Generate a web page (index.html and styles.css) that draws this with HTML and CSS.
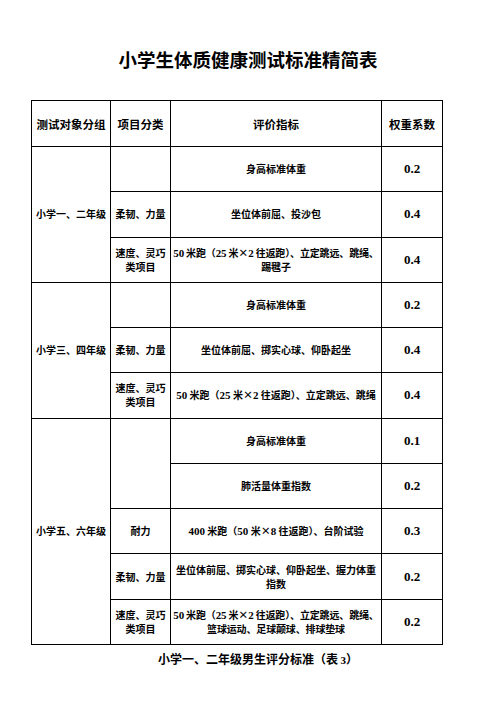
FILE: index.html
```html
<!DOCTYPE html>
<html lang="zh">
<head>
<meta charset="utf-8">
<link rel="stylesheet" href="styles.css">
</head>
<body>
<div class="page">
  <h1 class="title">小学生体质健康测试标准精简表</h1>
  <table class="grid">
    <colgroup>
      <col class="c1"><col class="c2"><col class="c3"><col class="c4">
    </colgroup>
    <thead>
      <tr class="head">
        <th>测试对象分组</th>
        <th>项目分类</th>
        <th>评价指标</th>
        <th>权重系数</th>
      </tr>
    </thead>
    <tbody>
      <tr>
        <td rowspan="3">小学一、二年级</td>
        <td></td>
        <td>身高标准体重</td>
        <td class="num">0.2</td>
      </tr>
      <tr>
        <td>柔韧、力量</td>
        <td>坐位体前屈、投沙包</td>
        <td class="num">0.4</td>
      </tr>
      <tr>
        <td>速度、灵巧<br>类项目</td>
        <td class="tight"><span class="n">50</span> 米跑（<span class="n">25</span> 米×<span class="n">2</span> 往返跑）、立定跳远、跳绳、<br>踢毽子</td>
        <td class="num">0.4</td>
      </tr>
      <tr>
        <td rowspan="3">小学三、四年级</td>
        <td></td>
        <td>身高标准体重</td>
        <td class="num">0.2</td>
      </tr>
      <tr>
        <td>柔韧、力量</td>
        <td>坐位体前屈、掷实心球、仰卧起坐</td>
        <td class="num">0.4</td>
      </tr>
      <tr>
        <td>速度、灵巧<br>类项目</td>
        <td><span class="n">50</span> 米跑（<span class="n">25</span> 米×<span class="n">2</span> 往返跑）、立定跳远、跳绳</td>
        <td class="num">0.4</td>
      </tr>
      <tr>
        <td rowspan="5">小学五、六年级</td>
        <td rowspan="2"></td>
        <td>身高标准体重</td>
        <td class="num">0.1</td>
      </tr>
      <tr>
        <td>肺活量体重指数</td>
        <td class="num">0.2</td>
      </tr>
      <tr>
        <td>耐力</td>
        <td><span class="n">400</span> 米跑（<span class="n">50</span> 米×<span class="n">8</span> 往返跑）、台阶试验</td>
        <td class="num">0.3</td>
      </tr>
      <tr>
        <td>柔韧、力量</td>
        <td>坐位体前屈、掷实心球、仰卧起坐、握力体重<br>指数</td>
        <td class="num">0.2</td>
      </tr>
      <tr>
        <td>速度、灵巧<br>类项目</td>
        <td class="tight"><span class="n">50</span> 米跑（<span class="n">25</span> 米×<span class="n">2</span> 往返跑）、立定跳远、跳绳、<br>篮球运动、足球颠球、排球垫球</td>
        <td class="num">0.2</td>
      </tr>
    </tbody>
  </table>
  <p class="caption">小学一、二年级男生评分标准（表 <span class="n">3</span>）</p>
</div>
</body>
</html>
```

FILE: styles.css
```css
html, body {
  margin: 0;
  padding: 0;
  background: #ffffff;
}

.page {
  width: 496px;
  padding-top: 48px;
  font-family: "Noto Sans CJK SC", "Liberation Serif", sans-serif;
  color: #000000;
}

.title {
  margin: 0;
  height: 23px;
  line-height: 23px;
  font-size: 18.5px;
  font-weight: 700;
  text-align: center;
}

.grid {
  margin: 29px 0 0 31px;
  width: 411px;
  border-collapse: collapse;
  table-layout: fixed;
}

.c1 { width: 79px; }
.c2 { width: 60px; }
.c3 { width: 211px; }
.c4 { width: 61px; }

.grid th,
.grid td {
  border: 1px solid #000000;
  padding: 0;
  text-align: center;
  vertical-align: middle;
  font-weight: 700;
  white-space: nowrap;
}

.grid th {
  height: 45px;
  font-size: 11.5px;
  line-height: 14px;
}

.grid tbody tr {
  height: 45.27px;
}

.grid td {
  font-size: 10px;
  line-height: 14px;
}

.grid td.tight {
  letter-spacing: -0.15px;
}

.n {
  font-family: "Liberation Serif", serif;
  font-size: 11px;
}

.grid td.num {
  font-family: "Liberation Serif", serif;
  font-size: 13px;
}

.caption {
  margin: 7px 0 0 0;
  padding-left: 20px;
  text-align: center;
  font-size: 12px;
  line-height: 14px;
  font-weight: 700;
}
```
